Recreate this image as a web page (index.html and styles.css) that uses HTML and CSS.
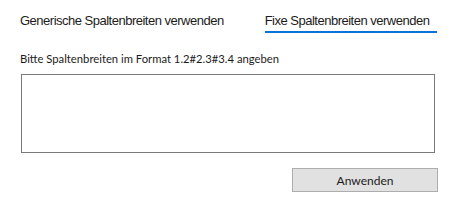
FILE: index.html
```html
<html>
<head>
    <title>Spaltenbreiten</title>
    <link rel="stylesheet" href="styles.css">
</head>
<body>

<div class="tabs">
    <span class="tab">Generische Spaltenbreiten verwenden</span>
    <span class="tab active">Fixe Spaltenbreiten verwenden</span>
</div>

<div class="panel">
    <p class="hint">Bitte Spaltenbreiten im Format 1.2#2.3#3.4 angeben</p>
    <textarea id="widths"></textarea>
    <div class="actions">
        <button id="apply">Anwenden</button>
    </div>
</div>

</body>
</html>
```

FILE: styles.css
```css
body {
    margin: 0;
    background: #fff;
    color: #1b1b1b;
    font-family: "Liberation Sans", Arial, sans-serif;
}
.tabs {
    display: flex;
    padding: 13px 0 0 20px;
    height: 20px;
}
.tab {
    flex-shrink: 0;
    white-space: nowrap;
    font-size: 13px;
    letter-spacing: -0.5px;
    line-height: 16px;
    margin-right: 41px;
}
.tab.active {
    padding-right: 8px;
    height: 18px;
    border-bottom: 2px solid #0a74d6;
}
.panel {
    padding: 0 18px 0 20px;
}
.hint {
    margin: 18px 0 0 0;
    white-space: nowrap;
    font-family: Lato, "Noto Sans", sans-serif;
    font-size: 11.25px;
    line-height: 15px;
}
#widths {
    display: block;
    box-sizing: border-box;
    margin: 8px 0 0 1px;
    width: 414px;
    height: 79px;
    border: 1px solid #7a7a7a;
    resize: none;
    outline: none;
}
.actions {
    display: flex;
    justify-content: flex-end;
    margin-top: 15px;
}
#apply {
    box-sizing: border-box;
    width: 146px;
    height: 24px;
    background: #e1e1e1;
    border: 1px solid #adadad;
    border-radius: 0;
    font-family: Lato, "Noto Sans", sans-serif;
    font-size: 12px;
    color: #1b1b1b;
}
```
